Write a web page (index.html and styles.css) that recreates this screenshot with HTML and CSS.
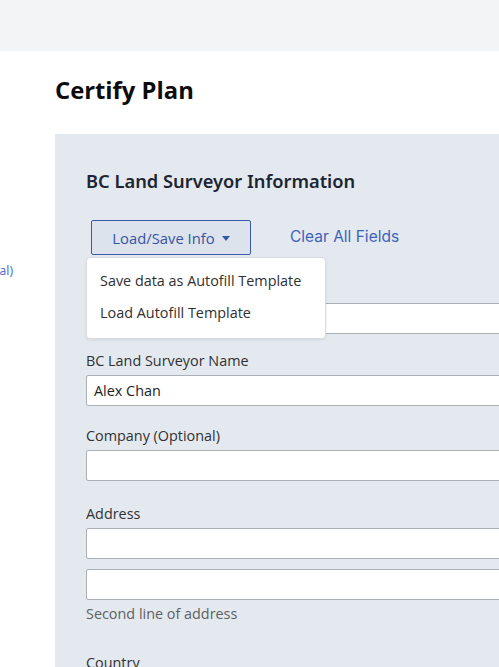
FILE: index.html
```html
<!DOCTYPE html>
<html>
<head>
<meta charset="utf-8">
<link rel="stylesheet" href="styles.css">
</head>
<body>
<div class="topbar"></div>
<div class="page">
  <aside class="side"><span class="side-link">Company (Optional)</span></aside>
  <main class="main">
    <h1 class="title">Certify Plan</h1>
    <section class="panel">
      <h2 class="panel-title">BC Land Surveyor Information</h2>
      <div class="actions">
        <div class="dd">
          <button class="dd-btn">Load/Save Info <span class="caret"></span></button>
          <div class="menu">
            <div class="menu-item">Save data as Autofill Template</div>
            <div class="menu-item">Load Autofill Template</div>
          </div>
        </div>
        <a class="clear">Clear All Fields</a>
      </div>
      <div class="field f1">
        <label class="label">BC Land Surveyor Number</label>
        <div class="input"></div>
      </div>
      <div class="field f2">
        <label class="label">BC Land Surveyor Name</label>
        <div class="input">Alex Chan</div>
      </div>
      <div class="field f3">
        <label class="label">Company (Optional)</label>
        <div class="input"></div>
      </div>
      <div class="field f4">
        <label class="label">Address</label>
        <div class="input"></div>
        <div class="input second"></div>
        <div class="help">Second line of address</div>
      </div>
      <div class="field f5">
        <label class="label">Country</label>
        <div class="input"></div>
      </div>
    </section>
  </main>
</div>
</body>
</html>
```

FILE: styles.css
```css
html, body {
  margin: 0;
  padding: 0;
  background: #ffffff;
  overflow: hidden;
}
body {
  width: 499px;
  height: 667px;
  font-family: "Open Sans", "Noto Sans", sans-serif;
  color: #313132;
}
.topbar {
  height: 51px;
  background: #f3f4f6;
}
.page {
  display: flex;
}
.side {
  width: 55px;
  flex: none;
  overflow: hidden;
  display: flex;
  justify-content: flex-end;
  padding-top: 212px;
  box-sizing: border-box;
}
.side-link {
  white-space: nowrap;
  font-family: "Noto Sans", sans-serif;
  font-size: 12px;
  line-height: 16px;
  color: #4a72d8;
  margin-right: 42px;
  flex: none;
}
.main {
  flex: 1;
  min-width: 0;
}
.title {
  margin: 0;
  padding-top: 23px;
  height: 83px;
  box-sizing: border-box;
  font-family: "Open Sans", sans-serif;
  font-weight: 700;
  font-size: 23.8px;
  line-height: 32px;
  color: #0c0c0c;
}
.panel {
  background: #e4e9f0;
  width: 600px;
  height: 600px;
  padding: 36px 0 0 31px;
  box-sizing: border-box;
}
.panel-title {
  margin: 0;
  font-family: "Noto Sans", sans-serif;
  font-weight: 600;
  font-size: 18.3px;
  line-height: 22px;
  color: #1e2531;
}
.actions {
  display: flex;
  align-items: center;
  margin-top: 28px;
  height: 35px;
}
.dd {
  position: relative;
  margin-left: 5px;
}
.dd-btn {
  height: 35px;
  width: 160px;
  box-sizing: border-box;
  border: 1px solid #3a5aa6;
  border-radius: 2px;
  background: #dde3ed;
  color: #3753a3;
  font-family: "Open Sans", sans-serif;
  font-size: 14.8px;
  padding: 0;
  display: flex;
  align-items: center;
  justify-content: center;
  gap: 7px;
}
.caret {
  width: 0;
  height: 0;
  border-left: 4.5px solid transparent;
  border-right: 4.5px solid transparent;
  border-top: 5px solid #3a5aa6;
  margin-top: 1px;
}
.menu {
  position: absolute;
  top: 37px;
  left: -5px;
  width: 240px;
  height: 82px;
  box-sizing: border-box;
  background: #fff;
  border: 1px solid #d9dde3;
  border-radius: 4px;
  box-shadow: 0 1px 3px rgba(0,0,0,0.08);
  padding-top: 7px;
  z-index: 5;
}
.menu-item {
  padding-left: 13px;
  font-size: 14.4px;
  line-height: 32px;
  height: 32px;
  color: #2f2f30;
  white-space: nowrap;
}
.clear {
  margin-left: 39px;
  font-family: "Inter", sans-serif;
  font-size: 15.5px;
  color: #3b63b8;
  line-height: 20px;
  margin-top: -1px;
}
.field {
  display: flex;
  flex-direction: column;
}
.label {
  font-size: 14.4px;
  line-height: 20px;
  height: 20px;
  margin-bottom: 4px;
  color: #313132;
}
.input {
  height: 31px;
  box-sizing: border-box;
  border: 1px solid #a9b0b8;
  border-radius: 2px;
  background: #fff;
  font-size: 14.4px;
  line-height: 29px;
  padding-left: 7px;
  color: #222;
}
.second {
  margin-top: 10px;
}
.help {
  font-size: 14.4px;
  line-height: 20px;
  color: #606060;
  margin-top: 4px;
}
.f1 { margin-top: 24px; }
.f2 { margin-top: 17px; }
.f3 { margin-top: 20px; }
.f4 { margin-top: 23px; }
.f5 { margin-top: 29px; }
```
